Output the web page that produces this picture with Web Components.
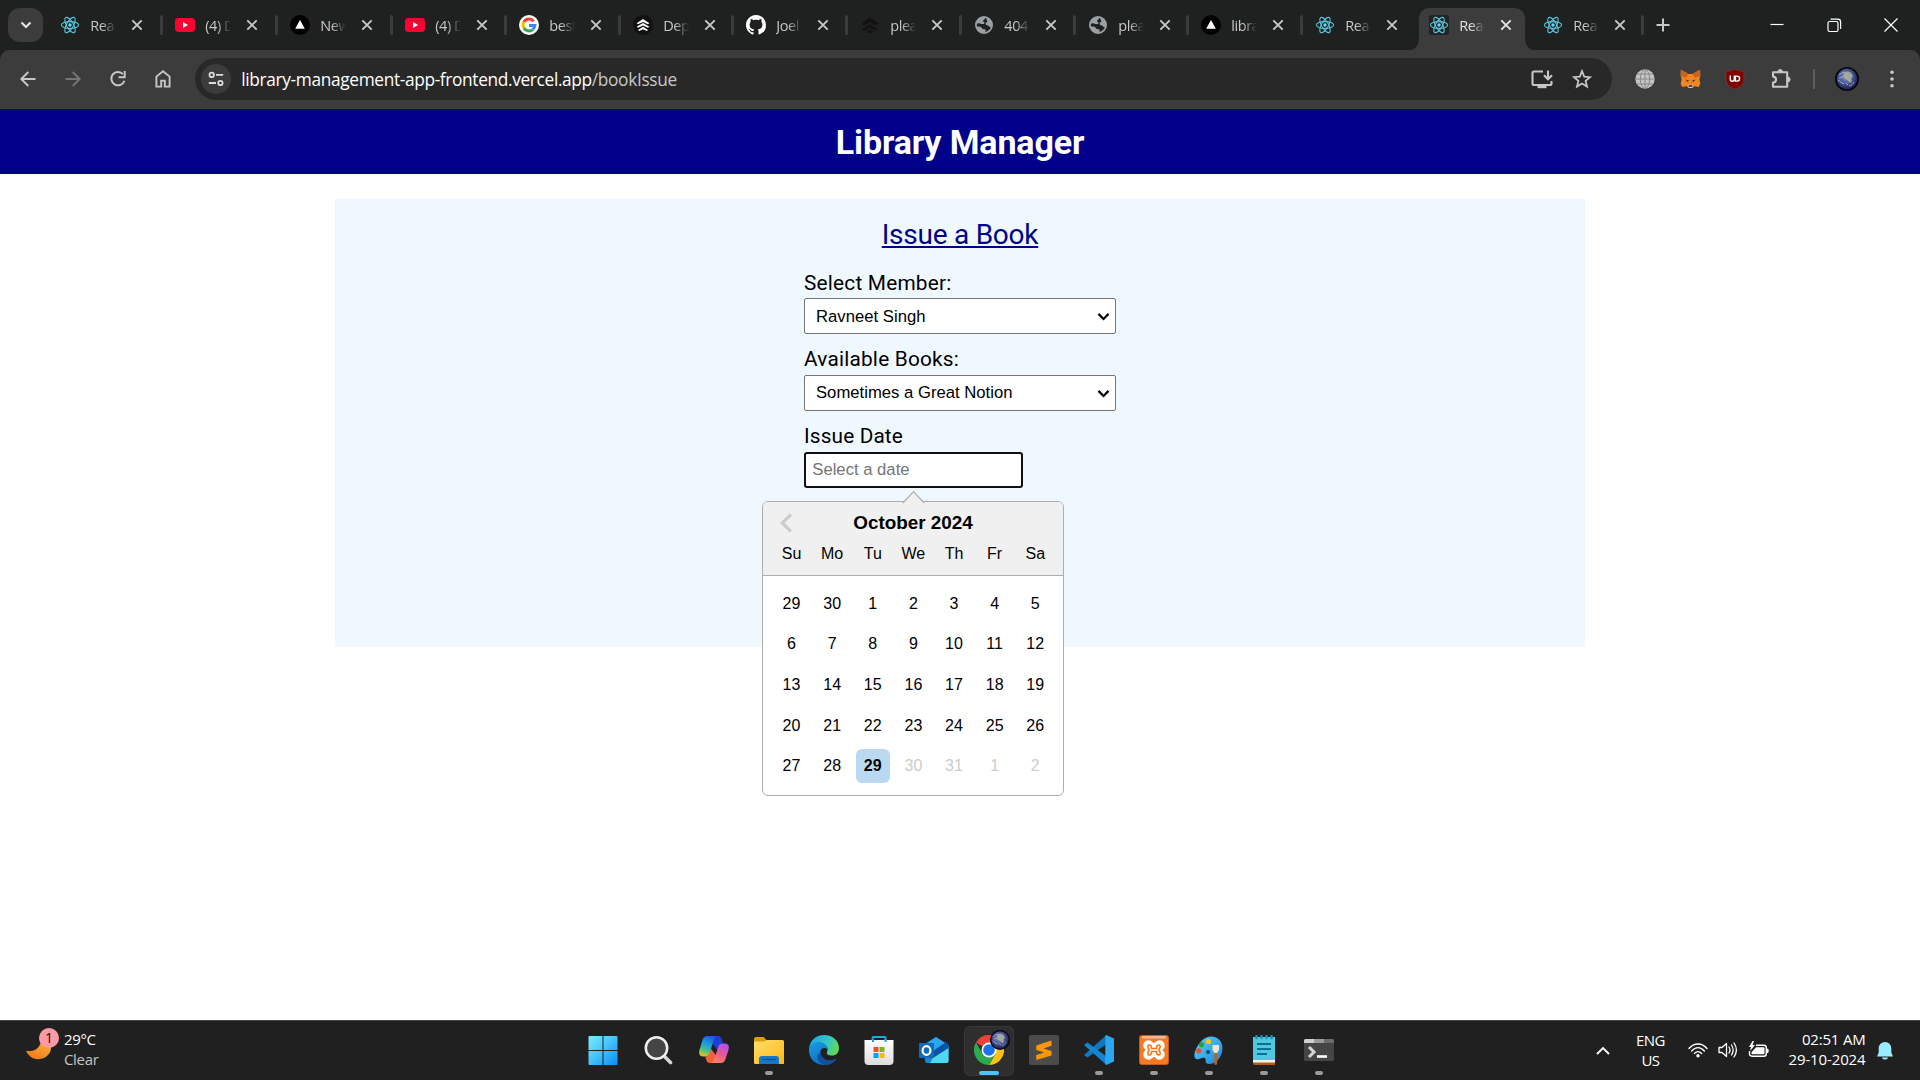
<!DOCTYPE html>
<html lang="en">
<head>
<meta charset="utf-8">
<title>Library Manager</title>
<style>
  html, body { margin: 0; width: 1920px; height: 1080px; overflow: hidden; background: #fff; }
  body { display: flex; flex-direction: column; font-family: "Liberation Sans", Arial, sans-serif; }
</style>
</head>
<body>
<tab-strip></tab-strip>
<tool-bar></tool-bar>
<library-page></library-page>
<task-bar></task-bar>

<script>
const REACT = `<g fill="none" stroke="#58c4dc" stroke-width="1.1"><ellipse cx="10" cy="10" rx="8.6" ry="3.4"/><ellipse cx="10" cy="10" rx="8.6" ry="3.4" transform="rotate(60 10 10)"/><ellipse cx="10" cy="10" rx="8.6" ry="3.4" transform="rotate(120 10 10)"/></g><circle cx="10" cy="10" r="1.7" fill="#61dafb"/>`;
const EARTH = `<defs><radialGradient id="e" cx=".45" cy=".4" r=".6"><stop offset="0" stop-color="#7f8fc0"/><stop offset=".55" stop-color="#4a5796"/><stop offset="1" stop-color="#1a1f4a"/></radialGradient></defs><circle cx="12" cy="12" r="12" fill="#05060f"/><circle cx="12" cy="12" r="10.4" fill="url(#e)"/><path d="M9 6c2-2 5-2 7 0l2 3-2 3 1 2-2 2-3-3-3-2-1-2z" fill="#b3b59c" opacity=".8"/><path d="M4 8c2-1 3-3 6-3M3 13c2 1 3 3 6 4M14 19c2 0 4-2 5-4M8 10c-2 0-3 1-4 1M11 16l2 2" fill="none" stroke="#cfd8ee" stroke-width="1" opacity=".7"/>`;
// Each entry: [viewBox width, viewBox height, markup]
const ICONS = {
  react: [20, 20, REACT],
  reactbox: [20, 20, `<rect width="20" height="20" rx="2.5" fill="#232323"/>` + REACT],
  youtube: [20, 20, `<rect y="3" width="20" height="14" rx="3.4" fill="#ff0033"/><path d="M8 7.1v5.8l5-2.9z" fill="#fff"/>`],
  vercel: [20, 20, `<circle cx="10" cy="10" r="10" fill="#000"/><path d="M10 5l4.8 8.7H5.2z" fill="#fff"/>`],
  google: [20, 20, `<circle cx="10" cy="10" r="10" fill="#fff"/><g fill="none" stroke-width="3"><path d="M14.6 6.2A5.9 5.9 0 0 0 4.9 7.1" stroke="#ea4335"/><path d="M4.9 7.1a5.9 5.9 0 0 0 0 5.8" stroke="#fbbc05"/><path d="M4.9 12.9a5.9 5.9 0 0 0 8.8 1.7" stroke="#34a853"/><path d="M10 10.4h5.9a5.9 5.9 0 0 1-2.2 4.2" stroke="#4285f4"/></g>`],
  render: [20, 20, `<circle cx="10" cy="10" r="10" fill="#111"/><path d="M3.6 8.2L10 4l6.4 4.2-1.5 1L10 7.1 5.1 9.200zM3.600 11.700L10 7.900l6.400 3.800-1.500 1L10 10.600l-4.900 2.100zM5 15.100l5-3.400 5 3.400-1.200.8L10 14.200l-3.800 1.700z" fill="#fff"/>`],
  renderdark: [20, 20, `<path d="M2 8L10 2.500 18 8l-1.500 2.500L10 7.600 3.500 10.500zM2 14l8-4.800 8 4.800-1.500 2L10 13l-6.500 3zM6 17l4-2.600 4 2.600-4 1.200z" fill="#121312"/>`],
  github: [16, 16, `<path fill="#fff" d="M8 0C3.58 0 0 3.58 0 8c0 3.54 2.29 6.53 5.47 7.59.4.07.55-.17.55-.38 0-.19-.01-.82-.01-1.49-2.01.37-2.53-.49-2.69-.94-.09-.23-.48-.94-.82-1.13-.28-.15-.68-.52-.01-.53.63-.01 1.08.58 1.23.82.72 1.21 1.87.87 2.33.66.07-.52.28-.87.51-1.07-1.78-.2-3.64-.89-3.64-3.95 0-.87.31-1.59.82-2.15-.08-.2-.36-1.02.08-2.12 0 0 .67-.21 2.2.82.64-.18 1.32-.27 2-.27s1.36.09 2 .27c1.53-1.04 2.2-.82 2.2-.82.44 1.1.16 1.92.08 2.12.51.56.82 1.27.82 2.15 0 3.07-1.87 3.75-3.65 3.95.29.25.54.73.54 1.48 0 1.07-.01 1.93-.01 2.2 0 .21.15.46.55.38A8.01 8.01 0 0 0 16 8c0-4.42-3.58-8-8-8z"/>`],
  world: [20, 20, `<circle cx="10" cy="10" r="8.100" fill="#1f2120" stroke="#9aa0a6" stroke-width="1.800"/><path d="M2 8.500C2.500 5 5.500 2 9.500 2c1.700 0 2.300 1 1.300 1.900-1.200 1-1.900 1.300-1.700 2.400.2 1 1.400.6 1.400 1.600 0 1.300-1.700 1.300-3.200 1.100-1.200-.2-1.500-.8-2.800-.8-1 0-1.500.9-2.500.3zM12.500 2.400c3 1 5.500 4 5.500 7.600 0 1.500-.4 2.500-.4 2.500-1.500.3-2.100-.8-3.300-1.700-1.100-.8-2.700-.3-2.700-2 0-1.600 1.700-1.400 1.700-2.700 0-1-1.600-2.300-.8-3.700zM2.400 11.500c2 .1 3.800-.1 5 .9 1 .8.5 1.500 1.600 1.700 1 .2 1.500-.2 2.300.5.9.8.2 2.200-.8 3.200-4.200.3-7.400-2.600-8.100-6.300z" fill="#9aa0a6"/>`],
  close: [20, 20, `<path d="M5.300 5.300l9.400 9.400m0-9.400l-9.400 9.400" stroke="currentColor" stroke-width="1.900" fill="none"/>`],
  down: [20, 20, `<path d="M5.500 7.500l4.500 4.500 4.500-4.500" fill="none" stroke="#e3e3e3" stroke-width="2.200"/>`],
  plus: [20, 20, `<path d="M10 3.500v13M3.500 10h13" stroke="#c7c7c7" stroke-width="2" fill="none"/>`],
  min: [20, 20, `<path d="M3.500 9.500h13" stroke="#fff" stroke-width="1.200"/>`],
  restore: [20, 20, `<rect x="4" y="6.500" width="10" height="10" rx="1.500" fill="none" stroke="#fff" stroke-width="1.200"/><path d="M6.500 4.100h7.300q2.800 0 2.800 2.800v7" fill="none" stroke="#fff" stroke-width="1.200"/>`],
  xwin: [20, 20, `<path d="M3.500 3.500l13 13m0-13l-13 13" stroke="#fff" stroke-width="1.200"/>`],
  back: [20, 20, `<path d="M17.500 10H3.700M10.300 3L3.300 10l7 7" fill="none" stroke="#c7c7c7" stroke-width="1.900"/>`],
  fwd: [20, 20, `<path d="M2.500 10h13.800M9.700 3l7 7-7 7" fill="none" stroke="#757575" stroke-width="1.900"/>`],
  reload: [20, 20, `<path d="M16.400 11.700A6.700 6.700 0 1 1 15 5.100" fill="none" stroke="#c7c7c7" stroke-width="2"/><path d="M16.700 2v6.200h-6.200" fill="none" stroke="#c7c7c7" stroke-width="2"/>`],
  home: [20, 20, `<path d="M3.400 17.600V7.600L10 2.200l6.600 5.400v10h-4.800v-6H8.200v6z" fill="none" stroke="#c7c7c7" stroke-width="1.900"/>`],
  tune: [20, 20, `<g fill="none" stroke="#dcdcdc" stroke-width="1.800"><circle cx="5.700" cy="5.900" r="2.200"/><path d="M10 5.900h7.200M2.800 14h7.200"/><circle cx="14.400" cy="14" r="2.200"/></g>`],
  install: [24, 24, `<path d="M13 4.500H4q-1.500 0-1.500 1.500v10.500Q2.500 18 4 18h16q1.500 0 1.500-1.500V14" fill="none" stroke="#c7c7c7" stroke-width="2.100"/><path d="M7.500 18h9v3.200h-9z" fill="#c7c7c7"/><path d="M18 3.500v8M14 8.200l4 4 4-4" fill="none" stroke="#c7c7c7" stroke-width="2.100"/>`],
  star: [22, 22, `<path d="M11 3.200l2.200 5.400 5.800.5-4.400 3.800 1.400 5.700-5-3-5 3 1.400-5.700L3 9.100l5.800-.5z" fill="none" stroke="#c7c7c7" stroke-width="1.800"/>`],
  globe: [20, 20, `<circle cx="10" cy="10" r="9.700" fill="#c4c4c4"/><g fill="none" stroke="#858585" stroke-width=".9"><ellipse cx="10" cy="10" rx="4.600" ry="9.500"/><path d="M10 .3v19.400M.3 10h19.400M2 5h16M2 15h16"/></g>`],
  fox: [22, 20, `<path d="M1 .8l8 4.400h4L21 .8l.3 6-1 4.200 1 4.500-1.600 3.400-4.700-.9-2 1.500H9l-2-1.500-4.700.9L.7 15.500l1-4.500-1-4.200z" fill="#f5841f"/><path d="M1 .8l8 4.400-3 4-5.300-2zM21 .8l-8 4.400 3 4 5.300-2z" fill="#c8641f"/><path d="M5.500 11l3.800 1-1 1.700zM16.500 11l-3.800 1 1 1.700z" fill="#3a2b1c"/><path d="M8.500 16.500h5l.4 2-1.200 1.300H9.300L8.100 18.500z" fill="#d8c5b5"/><path d="M9.200 17h3.600l.3 1.500H8.900z" fill="#221"/>`],
  ublock: [20, 20, `<path d="M10 0c3 1.800 5.500 2.400 8.800 2.500V11c0 4.200-4 7-8.800 9.200C5.200 18 1.200 15.200 1.200 11V2.500C4.500 2.400 7 1.800 10 0z" fill="#800000" stroke="#a03535" stroke-width=".5"/><path d="M5.300 6.500v3.700a2 2 0 0 0 4 0V6.500M10.400 7.100h1.700a2.500 2.500 0 0 1 0 5h-1.700z" fill="none" stroke="#fff" stroke-width="1.400"/>`],
  puzzle: [24, 24, `<path d="M4 5.200h14.200V10.300V19.700H4V15.600a3 3 0 0 0 0-6z" fill="none" stroke="#c7c7c7" stroke-width="2.100" stroke-linejoin="round"/><path d="M8.900 4.900a2.300 2.300 0 0 1 4.600 0zM18.600 9.900a2.500 2.500 0 0 1 0 5z" fill="#c7c7c7" stroke="#c7c7c7"/>`],
  earth: [24, 24, EARTH],
  dots: [20, 20, `<g fill="#c7c7c7"><circle cx="10" cy="3.200" r="1.800"/><circle cx="10" cy="10" r="1.800"/><circle cx="10" cy="16.800" r="1.800"/></g>`],
  seldown: [14, 14, `<path d="M1.600 4.200l5.400 5.400 5.400-5.400" fill="none" stroke="#000" stroke-width="2.400"/>`],
  moon: [30, 30, `<defs><linearGradient id="m" x1="1" y1="0" x2=".4" y2="1"><stop offset="0" stop-color="#f8c23c"/><stop offset="1" stop-color="#ee7a1e"/></linearGradient></defs><path d="M0 18.500c9 2 17-3 17.500-15C27 7 30 14 26 21.500 20 31 5 30.500 0 18.500z" fill="url(#m)"/>`],
  windows: [30, 30, `<defs><linearGradient id="w" gradientUnits="userSpaceOnUse" x1="0" y1="0" x2="30" y2="30"><stop offset="0" stop-color="#7ff0fd"/><stop offset=".5" stop-color="#45c1fb"/><stop offset="1" stop-color="#0a8cf5"/></linearGradient></defs><path d="M.5 2a1 1 0 0 1 1-1H14.500v14H.5zM15.500 1H28.500a1 1 0 0 1 1 1v13h-14zM.5 16h14v14H1.500a1 1 0 0 1-1-1zM15.500 16h14v13a1 1 0 0 1-1 1h-13z" fill="url(#w)"/>`],
  search: [30, 30, `<path d="M19.500 20.500l7 7" stroke="#d6d6d6" stroke-width="3.600" stroke-linecap="round"/><circle cx="12.500" cy="13" r="10.700" fill="#454545" stroke="#f0f0f0" stroke-width="2.500"/>`],
  copilot: [30, 30, `<defs><linearGradient id="a" x1=".7" y1="0" x2=".3" y2="1"><stop offset="0" stop-color="#1b55d8"/><stop offset=".45" stop-color="#1ba0e0"/><stop offset=".7" stop-color="#3fbf8f"/><stop offset="1" stop-color="#e2c21f"/></linearGradient><linearGradient id="b" x1=".7" y1="0" x2=".2" y2="1"><stop offset="0" stop-color="#b052f0"/><stop offset=".5" stop-color="#e9588f"/><stop offset="1" stop-color="#ff8c55"/></linearGradient></defs><path d="M13 1h6c2.500 0 3.300 1.500 4 4l1 3.500h2c-3 0-4.500 1.500-5.500 4.500l-1 3.500-6-8z" fill="#1c3fd0"/><path d="M17 28h-6c-2.500 0-3.300-1.500-4-4l-.800-2.500C9 21.500 9.800 20 10.700 17l1-3.500 5.500 7z" fill="#f2603c"/><path d="M8.500 1H19c-2.500 0-3.800 2-4.600 5L10.700 18c-.8 2.600-2.200 3.500-5 3.500H4.500C.5 21.500-.5 19 .5 15L3.500 5C4.500 2 6 1 8.500 1z" fill="url(#a)"/><path d="M21.500 28H11c2.500 0 3.800-2 4.600-5l3.700-11c.8-2.600 2.200-3.500 5-3.500h1.200c4 0 5 2.500 4 6.500l-3 9c-1 3-2.500 4-5 4z" fill="url(#b)"/>`],
  folder: [30, 30, `<defs><linearGradient id="f" x1="0" y1="0" x2="1" y2="1"><stop offset="0" stop-color="#ffdf6b"/><stop offset="1" stop-color="#fdb714"/></linearGradient></defs><path d="M0 4q0-2 2-2h7.500l3.500 3.500H28v8H0z" fill="#e09b0a"/><path d="M0 6.500h10L13 5h15.500q1.500 0 1.500 1.500v22.500H1.500Q0 29 0 27.500z" fill="url(#f)"/><path d="M5 29v-5q0-3 3-3h14q3 0 3 3v5z" fill="#1478c8"/><path d="M8.500 24.500h13" stroke="#0a4c8c" stroke-width="1.200"/>`],
  edge: [30, 30, `<defs><linearGradient id="a" x1="0" y1=".2" x2="1" y2=".5"><stop offset="0" stop-color="#1ea3e0"/><stop offset=".6" stop-color="#35c5c9"/><stop offset="1" stop-color="#62d94f"/></linearGradient><linearGradient id="b" x1="0" y1="0" x2=".8" y2="1"><stop offset="0" stop-color="#1b9de2"/><stop offset="1" stop-color="#0a62bd"/></linearGradient></defs><path d="M0 14C1 5 7 0 15 0c9 0 15 6 15 13 0 5-3 7.500-7 7.500-3.500 0-6-1-5-3.500 2-5-1-7-5-8C8 8 2 10 0 14z" fill="url(#a)"/><path d="M0 14c1-5 6-7.500 10.500-7 5.500.6 8 4 8 7.500-3-3-8-1-7 4 1 6 8 9.500 16 5C25 28 20 30 15 30 6 30-.7 23 0 14z" fill="url(#b)"/><path d="M11.400 17.500c-.5 6 8 10.500 16.100 6C25 28 20 30 16 30 8 28 6 20 11.400 17.500z" fill="#124f9c"/>`],
  store: [30, 30, `<defs><linearGradient id="s" x1="0" y1="0" x2="0" y2="1"><stop offset="0" stop-color="#fff"/><stop offset="1" stop-color="#dcdcdc"/></linearGradient></defs><path d="M8.500 7V2.800Q8.500 2 9.300 2h11.400q.8 0 .8.800V7" fill="none" stroke="#1cabe2" stroke-width="1.800"/><path d="M.5 5h29v21q0 4-4 4h-21q-4 0-4-4z" fill="url(#s)"/><path d="M8 4h2v3H8zM20.500 4h2v3h-2z" fill="#1c9ee0"/><path d="M9.500 12h5v5h-5z" fill="#f25022"/><path d="M15.500 12h5v5h-5z" fill="#7fba00"/><path d="M9.500 18h5v5h-5z" fill="#00a4ef"/><path d="M15.500 18h5v5h-5z" fill="#ffb900"/>`],
  outlook: [30, 30, `<path d="M4 10L17 2l12.500 8v16q0 2-2 2H8q-2 0-2-2z" fill="#1a83d6"/><path d="M6 9.500L17 2l9 6-10 8z" fill="#28a8ea"/><path d="M17 18l12.500-7v15q0 2-2 2H11z" fill="#4fd9ee"/><path d="M14 16l13-9 2.500 3v3L14 23z" fill="#0a52a5"/><rect x="0" y="8" width="15" height="15" rx="1" fill="#0f6cbd"/><ellipse cx="7.500" cy="15.500" rx="3.900" ry="4.400" fill="none" stroke="#fff" stroke-width="2.200"/>`],
  chrome: [30, 30, `<path d="M15 15L2 7.500A15 15 0 0 1 28 7.500H15z" fill="#ea4335"/><path d="M15 7.500h13A15 15 0 0 1 15 30l6.500-11.300z" fill="#fbc116"/><path d="M21.500 18.700L15 30A15 15 0 0 1 2 7.500l6.500 11.300z" fill="#2da94f"/><circle cx="15" cy="15" r="7.500" fill="#fff"/><circle cx="15" cy="15" r="5.800" fill="#1a73e8"/>`],
  sublime: [30, 30, `<rect width="30" height="30" rx="2" fill="#4b4b4b"/><path d="M7.300 10.500L22.500 5.500v5.300l-8 2.700 8 2.500v4.500L7.300 25v-5l8-2.600-8-2.500z" fill="#ff9800"/>`],
  vscode: [30, 30, `<path d="M22.500 0v9L3.500 22.500 0 20z" fill="#0f78bf"/><path d="M0 10l3.500-2.500L22.500 21.500V30z" fill="#1386cf"/><path d="M22.300 0L30 3.600v22.800L22.300 30q-.8-.3-1-1.500V1.500q.2-1.200 1-1.500z" fill="#2aa7f0"/>`],
  xampp: [30, 30, `<rect x=".3" y=".3" width="29.400" height="29.400" rx="3" fill="#f57a22" stroke="#c9591a" stroke-width=".7"/><rect x="3" y="1" width="24" height="2.500" rx="1" fill="#ffb98a"/><path d="M9.500 10.500l11 9M20.500 10.500l-11 9" stroke="#fff" stroke-width="10.500" stroke-linecap="round"/><path d="M9.200 10.300c2.800-.8 3.300.7 3.300 3.200h5c0-2.500.5-4 3.300-3.200M9.200 19.700c2.800.8 3.300-.7 3.300-3.200h5c0 2.500.5 4 3.300 3.200M9.200 10.300c-1.500 1.500.3 2.700.8 4.700-.5 2-2.300 3.200-.8 4.700M20.800 10.300c1.500 1.500-.3 2.700-.8 4.700.5 2 2.300 3.200.8 4.700" fill="none" stroke="#f57a22" stroke-width="1.700" stroke-linecap="round"/>`],
  paint: [30, 30, `<defs><linearGradient id="p" x1="0" y1="0" x2="1" y2="1"><stop offset="0" stop-color="#5fd3f7"/><stop offset="1" stop-color="#1587dc"/></linearGradient></defs><path d="M12.500 2.500C20 -.500 28.500 4 28.500 13c0 9-6.500 16-13.500 16-4 0-3-3-3.500-5s-3-1.500-5-.500-5 1.500-6-1.500C-.500 18 4 6 12.500 2.500z" fill="url(#p)"/><circle cx="14.500" cy="6.500" r="2.600" fill="#fcc21b"/><circle cx="7.500" cy="9.700" r="2.600" fill="#2e9e3c"/><circle cx="4.800" cy="15.800" r="2.600" fill="#e2522f"/><circle cx="14" cy="17" r="2" fill="#0b3f77"/><path d="M20.300 17h2.800v12q-1.400 2-2.800 0z" fill="#b8621b"/><path d="M18.500 10h6.500v4.500L23.100 18h-2.800l-1.800-3.500z" fill="#f1e3cf"/>`],
  notepad: [30, 30, `<path d="M4 26h22v4H6q-2 0-2-2z" fill="#b55a14"/><path d="M4 2h22v24.500H4z" fill="#50c8e0"/><path d="M4 25h22v2.500H4z" fill="#eef6f8"/><path d="M8 9h14M8 14h14M8 19h10" stroke="#0f6f92" stroke-width="1.800"/><path d="M7.500 1v2M12.500 1v2M17.500 1v2M22.500 1v2" stroke="#1a8fb8" stroke-width="2.400" stroke-linecap="round"/>`],
  terminal: [30, 30, `<rect y="4" width="30" height="22" rx="1.500" fill="#454545"/><path d="M1.500 4H10v4H0V5.500Q0 4 1.500 4z" fill="#d0d0d0"/><path d="M10 4h10v4H10z" fill="#9a9a9a"/><path d="M20 4h8.500Q30 4 30 5.500V8H20z" fill="#6c6c6c"/><path d="M5 12l5 5-5 5" fill="none" stroke="#d4d4d4" stroke-width="3"/><path d="M13 21.500h10" stroke="#fff" stroke-width="2.600"/>`],
  up: [16, 16, `<path d="M2 11l6-6 6 6" fill="none" stroke="#fff" stroke-width="1.900"/>`],
  wifi: [20, 16, `<g fill="none" stroke="#fff" stroke-width="1.400" stroke-linecap="round"><path d="M1 6.500c5-6 13-6 18 0M3.600 9c4-4.500 8.800-4.500 12.800 0M6.300 11.500c2.500-2.500 4.900-2.500 7.400 0"/></g><circle cx="10" cy="13.800" r="1.700" fill="#fff"/>`],
  sound: [20, 18, `<path d="M1 6.500h3l4.500-4v13l-4.500-4H1zM11 6q2 3 0 6M13.500 4q3.300 5 0 10M16 2q4.800 7 0 14" fill="none" stroke="#fff" stroke-width="1.300" stroke-linejoin="round" stroke-linecap="round"/>`],
  battery: [22, 18, `<path d="M8 4.300h7.800q2.500 0 2.500 2.500v5.900q0 2.500-2.500 2.500H4q-2.500 0-2.500-2.500V10" fill="none" stroke="#fff" stroke-width="1.400"/><path d="M8.500 6.300h7q1 0 1 1v4.900q0 1-1 1H4.500q-1 0-1-1v-1L8 6.300z" fill="#fff"/><path d="M18.500 7.300q2.300 0 2.300 2.500t-2.300 2.500z" fill="#fff"/><path d="M4.500 0L1 6h2L2 10l5-6H4.500L6 0z" fill="#fff"/>`],
  bell: [18, 20, `<path d="M9 1c4 0 6.300 3 6.300 6.500v4L17 15.500H1l1.700-4v-4C2.700 4 5 1 9 1zM6 16.500h6c-.5 2.800-5.500 2.800-6 0z" fill="#99ebff"/>`],
  prev: [12, 20, `<path d="M11 1.500L2.300 10 11 18.500" fill="none" stroke="#ccc" stroke-width="3.300"/>`]
};

const define = (name, html, setup) => customElements.define(name, class extends HTMLElement {
  connectedCallback() {
    if (this.shadowRoot) return;
    const root = this.attachShadow({ mode: "open" });
    root.innerHTML = typeof html === "function" ? html(this) : html;
    if (setup) setup(this, root);
  }
});

define("ui-icon", el => {
  const [w, h, body] = ICONS[el.getAttribute("name")];
  const size = +(el.getAttribute("size") || w);
  return `<style>:host{display:block;flex:none;width:${size}px;height:${size * h / w}px}svg{display:block;width:100%;height:100%}</style><svg viewBox="0 0 ${w} ${h}">${body}</svg>`;
});

// A line of text tracked so that it fills the width given in its "w" attribute.
define("fit-text", `<style>:host{display:inline-block;white-space:pre}</style><slot></slot>`, el => {
  const target = +el.getAttribute("w"), n = el.textContent.length;
  el.style.letterSpacing = (target - el.getBoundingClientRect().width) / n + "px";
});

define("browser-tab", el => `<style>
  :host{display:block;width:${el.getAttribute("w")}px;height:50px;position:relative;font:14.500px "Open Sans","Noto Sans",sans-serif;color:#c7c7c7}
  .row{display:flex;align-items:center;height:50px;padding-left:13.500px;position:relative}
  .t{width:26px;height:24px;line-height:24px;margin:1px 0 0 10.300px;overflow:hidden;white-space:nowrap;letter-spacing:-.45px;-webkit-mask:linear-gradient(90deg,#000 45%,transparent 100%);mask:linear-gradient(90deg,#000 45%,transparent 100%)}
  .x{margin-left:10.600px}
  :host([sep])::after{content:"";position:absolute;right:-1.500px;top:15px;width:3px;height:20px;border-radius:2px;background:#3a3c3b}
  :host([active]){color:#e3e3e3}
  .bg{display:none;position:absolute;left:-9px;top:7.500px}
  :host([active]) .bg{display:block}
</style><svg class="bg" width="130" height="43"><path d="M0 43C7 43 12 38 12 30V12Q12 0 24 0H106Q118 0 118 12V30C118 38 123 43 130 43z" fill="#3c3c3c"/></svg>
<div class="row"><ui-icon name="${el.getAttribute("icon")}" size="20"></ui-icon><div class="t"><slot></slot></div><ui-icon class="x" name="close" size="20"></ui-icon></div>`);

define("tab-strip", () => {
  const tabs = [["react","Reac",115],["youtube","(4) D",115],["vercel","New",115],["youtube","(4) D",114],["google","best",114],["render","Dep",113],["github","Joel",114],["renderdark","plea",114],["world","404",114],["world","plea",113],["vercel","libra",114],["react","Reac",114],["reactbox","Reac",114],["react","Reac",113]];
  return `<style>
    :host{display:flex;flex:none;height:50px;background:#1f2120;padding-left:8px;box-sizing:border-box}
    .find{width:35px;height:34px;margin:8px 3.500px 0 0;border-radius:12px;background:#3c3c3c;display:flex;align-items:center;justify-content:center}
    .plus{margin:15px 0 0 10.500px}
    .win{margin-left:auto;display:flex;gap:37px;padding:14.500px 19px 0 0}
  </style><div class="find"><ui-icon name="down" size="20"></ui-icon></div>` +
  tabs.map(([i, t, w], k) => `<browser-tab icon="${i}" w="${w}" ${k === 12 ? "active" : k === 11 ? "" : "sep"}>${t}</browser-tab>`).join("") +
  `<ui-icon class="plus" name="plus" size="20"></ui-icon><div class="win"><ui-icon name="min" size="20"></ui-icon><ui-icon name="restore" size="20"></ui-icon><ui-icon name="xwin" size="20"></ui-icon></div>`;
});

define("tool-bar", `<style>
  :host{display:block;flex:none;height:59px;background:#1f2120}
  .bar{display:flex;align-items:center;height:59px;box-sizing:border-box;padding:0 0 1px 5px;background:#3c3c3c;border-radius:10px 10px 0 0}
  .b{width:45px;display:flex;justify-content:center}
  .omni{width:1417px;height:42px;margin:0 10.500px 0 10px;border-radius:21px;background:#282828;display:flex;align-items:center;box-sizing:border-box;padding:0 19px 0 6px;color:#fff;font:17.300px/24px "Open Sans","Noto Sans",sans-serif}
  .info{width:30px;height:30px;border-radius:50%;background:#3c3c3c;display:flex;align-items:center;justify-content:center;margin-right:10.300px}
  .omni fit-text{margin-top:2px}
  .path{color:#c7c7c7}
  .end{margin-left:auto;display:flex;align-items:center;gap:17px}
  .sep{width:2px;height:20px;background:#5d5d5d;margin:0 20px 0 10.500px}
  .dots{margin-left:23px}
  .pz{padding-left:1px}
</style><div class="bar">
  <div class="b"><ui-icon name="back"></ui-icon></div><div class="b"><ui-icon name="fwd"></ui-icon></div><div class="b"><ui-icon name="reload"></ui-icon></div><div class="b"><ui-icon name="home"></ui-icon></div>
  <div class="omni"><div class="info"><ui-icon name="tune"></ui-icon></div><fit-text w="435.500">library-management-app-frontend.vercel.app<span class="path">/bookIssue</span></fit-text>
  <div class="end"><ui-icon name="install" size="24"></ui-icon><ui-icon name="star" size="22"></ui-icon></div></div>
  <div class="b"><ui-icon name="globe"></ui-icon></div><div class="b"><ui-icon name="fox" size="21"></ui-icon></div><div class="b"><ui-icon name="ublock"></ui-icon></div><div class="b"><ui-icon class="pz" name="puzzle"></ui-icon></div>
  <div class="sep"></div><ui-icon name="earth" size="24"></ui-icon><ui-icon class="dots" name="dots"></ui-icon>
</div>`);

define("select-box", el => `<style>
  :host{display:block;width:312px}
  .l{font:20.800px/24px Roboto,sans-serif;color:#000;height:24px;margin-top:-.4px}
  .s{margin:3.700px 0 13.600px;height:35.800px;box-sizing:border-box;border:1.250px solid #767676;border-radius:2px;background:#fff;display:flex;align-items:center;justify-content:space-between;padding:.8px 5px 0 11px;font:16.660px/20px "Liberation Sans",Arial,sans-serif}
</style><div class="l"><fit-text w="${el.getAttribute("lw")}">${el.getAttribute("label")}</fit-text></div><div class="s"><fit-text w="${el.getAttribute("w")}">${el.getAttribute("value")}</fit-text><ui-icon name="seldown" size="13"></ui-icon></div>`);

define("date-picker", () => {
  const names = "Su Mo Tu We Th Fr Sa".split(" ");
  const days = [29, 30, ...Array.from({ length: 31 }, (_, i) => i + 1), 1, 2];
  return `<style>
  :host{display:block;position:relative;width:302px;height:294.800px;box-sizing:border-box;border:1.250px solid #aeaeae;border-radius:6px;background:#fff;color:#000;font:16px "Liberation Sans",Arial,sans-serif}
  .tri{position:absolute;left:139px;top:-12.500px}
  .prev{position:absolute;left:17px;top:11px}
  .head{height:74px;box-sizing:border-box;background:#f0f0f0;border-bottom:1px solid #aeaeae;border-radius:5px 5px 0 0;padding-top:8.800px}
  .m{text-align:center;font-weight:bold;font-size:18.880px;line-height:23px}
  .g{display:grid;grid-template-columns:repeat(7,40.640px);justify-content:center;padding-left:.800px}
  .g div{margin:3.320px;text-align:center;line-height:34px;height:34px;border-radius:6px}
  .names div{margin:0 3.320px}
  .names{margin-top:3.200px}
  .days{padding-top:7.300px}
  .g .today{background:#bad9f1;font-weight:bold}
  .g .off{color:#ccc}
</style><div class="head"><div class="m">October 2024</div><div class="g names">${names.map(n => `<div>${n}</div>`).join("")}</div></div>
<div class="g days">${days.map((d, i) => `<div class="${i === 30 ? "today" : i > 30 ? "off" : ""}">${d}</div>`).join("")}</div>
<svg class="tri" width="24" height="14"><path d="M.8 13L11.500 1.700 22.200 13" fill="#f0f0f0" stroke="#aeaeae" stroke-width="1.200"/></svg>
<ui-icon class="prev" name="prev" size="12"></ui-icon>`;
});

define("library-page", `<style>
  :host{display:flex;flex-direction:column;align-items:center;height:911px;background:#fff}
  .top{align-self:stretch;height:65px;box-sizing:border-box;padding-top:1px;background:#00008b;color:#fff;text-align:center;font:bold 34px/64px Roboto,sans-serif}
  .card{width:1250px;height:448px;margin-top:25px;background:#f0f8ff;display:flex;flex-direction:column;align-items:center;box-sizing:border-box;padding-top:19px}
  .h{font:28px/33px Roboto,sans-serif;color:#00008b;height:33px;margin-bottom:20px}
  .h fit-text{text-decoration:underline;text-decoration-thickness:2px;text-underline-offset:2px}
  .form{width:312px;display:flex;flex-direction:column}
  .l{font:20.800px/24px Roboto,sans-serif;height:24px;margin-top:-.4px}
  .in{margin-top:3.700px;width:218.800px;height:36px;box-sizing:border-box;border:2px solid #101010;border-radius:3px;background:#fff;color:#757575;font:16.660px/31px "Liberation Sans",Arial,sans-serif;padding-left:6.300px}
  select-box{display:flow-root}
  .anchor{position:relative;height:0}
  date-picker{position:absolute;left:-42px;top:13.500px;z-index:2}
</style>
<div class="top"><fit-text w="248.500">Library Manager</fit-text></div>
<div class="card"><div class="h"><fit-text w="156.500">Issue a Book</fit-text></div>
<div class="form">
  <select-box label="Select Member:" lw="147.500" value="Ravneet Singh" w="109.500"></select-box>
  <select-box label="Available Books:" lw="155" value="Sometimes a Great Notion" w="196.500"></select-box>
  <div class="l"><fit-text w="99">Issue Date</fit-text></div>
  <div class="in">Select a date</div>
  <div class="anchor"><date-picker></date-picker></div>
</div></div>`);

define("task-icon", el => `<style>
  :host{display:block;width:55px;flex:none;height:59px}
  :host([name=windows]){margin:0 1.500px 0 -1.500px}
  .c{width:50px;height:50px;margin:4.500px auto 0;box-sizing:border-box;padding:9.500px 10px 0;position:relative;border-radius:6px}
  :host([active]) .c{background:#2e2e2e;box-shadow:inset 0 0 0 1px #373737}
  .badge{position:absolute;left:26px;top:4px}
  i{display:none;width:8px;height:4px;margin:5.500px auto 0;border-radius:2px;background:#9a9a9a}
  :host([open]) i{display:block}
  :host([active]) i{display:block;width:20px;background:#4cc2ff}
</style><div class="c"><ui-icon name="${el.getAttribute("name")}" size="30"></ui-icon>${el.hasAttribute("active") ? `<ui-icon class="badge" name="earth" size="20"></ui-icon>` : ""}<i></i></div>`);

define("task-bar", `<style>
  :host{display:flex;flex:none;height:60px;box-sizing:border-box;border-top:1px solid #434746;background:#202020;color:#fff;font:15px/20px "Open Sans","Noto Sans",sans-serif}
  .wx{width:550.500px;padding-left:26px;display:flex;position:relative;padding-top:7.500px}
  .moon{margin:5px 11px 0 0}
  .badge{position:absolute;left:39px;top:7px;width:20px;height:20px;border-radius:50%;background:#ff99a4;color:#111;font-size:14px;line-height:20px;text-align:center}
  .sub{color:#c5c5c5}
  .tx div{height:20px}
  .apps{display:flex}
  .tray{margin-left:auto;display:flex;align-items:center;padding-right:26px}
  .lang{text-align:center;width:40px;margin:0 17px 1px 19.500px}
  .time{text-align:right;width:90px;margin:0 10.500px 3px 6px}
  .lang div,.time div{height:20px}
  .st{display:flex;align-items:center;gap:10px;margin-bottom:1px}
</style>
<div class="wx"><ui-icon class="moon" name="moon" size="27"></ui-icon><span class="badge">1</span><div class="tx"><div><fit-text w="31.500">29°C</fit-text></div><div class="sub"><fit-text w="34.500">Clear</fit-text></div></div></div>
<div class="apps"><task-icon name="windows"></task-icon><task-icon name="search"></task-icon><task-icon name="copilot"></task-icon><task-icon name="folder" open></task-icon><task-icon name="edge"></task-icon><task-icon name="store"></task-icon><task-icon name="outlook"></task-icon><task-icon name="chrome" active></task-icon><task-icon name="sublime"></task-icon><task-icon name="vscode" open></task-icon><task-icon name="xampp" open></task-icon><task-icon name="paint" open></task-icon><task-icon name="notepad" open></task-icon><task-icon name="terminal" open></task-icon></div>
<div class="tray"><ui-icon name="up" size="16"></ui-icon><div class="lang"><div><fit-text w="29">ENG</fit-text></div><div><fit-text w="18">US</fit-text></div></div>
<div class="st"><ui-icon name="wifi" size="20"></ui-icon><ui-icon name="sound" size="20"></ui-icon><ui-icon name="battery" size="22"></ui-icon></div>
<div class="time"><div><fit-text w="63.500">02:51 AM</fit-text></div><div><fit-text w="77">29-10-2024</fit-text></div></div><ui-icon name="bell" size="18"></ui-icon></div>`);
</script>
</body>
</html>
